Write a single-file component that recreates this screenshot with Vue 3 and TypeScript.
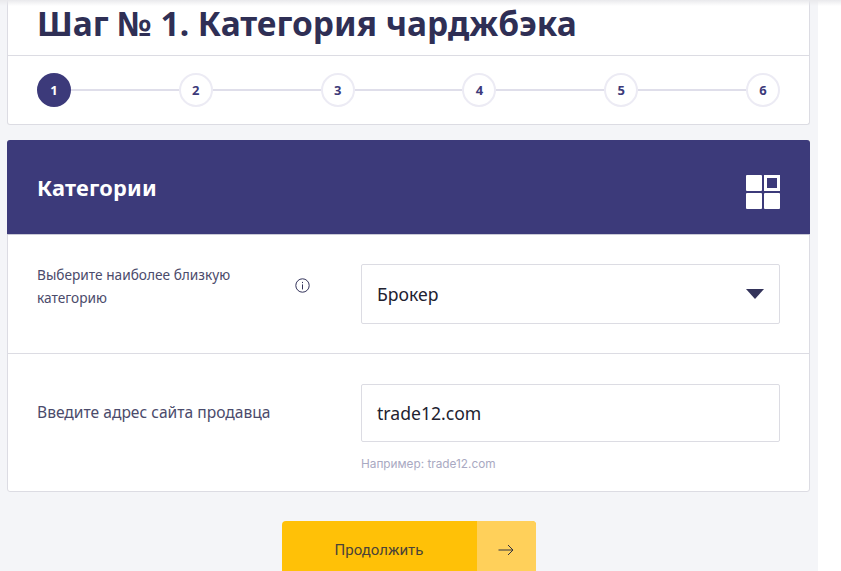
<script setup lang="ts">
const steps: number[] = [1, 2, 3, 4, 5, 6]
</script>

<template>
  <div class="page">
    <main class="column">
      <section class="card top">
        <h1 class="title">Шаг № 1. Категория чарджбэка</h1>
        <div class="steps">
          <template v-for="(s, i) in steps" :key="s">
            <span v-if="i > 0" class="line"></span>
            <span class="step" :class="{ active: i === 0 }">{{ s }}</span>
          </template>
        </div>
      </section>

      <section class="card form">
        <header class="head">
          <h2>Категории</h2>
          <svg width="34" height="34" viewBox="0 0 34 34">
            <rect x="0" y="0" width="16" height="16" rx="1" fill="#fff" />
            <rect x="19.5" y="1.5" width="13" height="13" fill="none" stroke="#fff" stroke-width="3" />
            <rect x="0" y="18" width="16" height="16" rx="1" fill="#fff" />
            <rect x="18" y="18" width="16" height="16" rx="1" fill="#fff" />
          </svg>
        </header>

        <div class="row first">
          <div class="label-wrap">
            <p class="label">Выберите наиболее близкую категорию</p>
            <svg class="info" width="15" height="15" viewBox="0 0 15 15">
              <circle cx="7.5" cy="7.5" r="6.7" fill="none" stroke="#33335a" stroke-width="1" />
              <rect x="7" y="6.4" width="1" height="5" fill="#33335a" />
              <rect x="7" y="3.9" width="1" height="1.2" fill="#33335a" />
            </svg>
          </div>
          <div class="control select">
            <span>Брокер</span>
            <svg width="18" height="10" viewBox="0 0 18 10">
              <path d="M0 0H18L9 10Z" fill="#33335a" />
            </svg>
          </div>
        </div>

        <div class="row second">
          <p class="label single">Введите адрес сайта продавца</p>
          <div class="field">
            <div class="control text">trade12.com</div>
            <p class="hint">Например: trade12.com</p>
          </div>
        </div>
      </section>

      <div class="actions">
        <button class="btn" type="button">
          <span class="btn-text">Продолжить</span>
          <span class="btn-icon">
            <svg width="16" height="12" viewBox="0 0 16 12">
              <path d="M0.5 6H15M10 1l5 5-5 5" fill="none" stroke="#33333f" stroke-width="1" />
            </svg>
          </span>
        </button>
      </div>
    </main>
  </div>
</template>

<style>
html, body { margin: 0; padding: 0; background: #fff; overflow: hidden; }
</style>

<style scoped>
.page {
  width: 841px;
  height: 571px;
  overflow: hidden;
  position: relative;
  background: #fff;
  font-family: "Noto Sans", "Open Sans", sans-serif;
}
.page::before {
  content: "";
  position: absolute;
  left: 0;
  right: 0;
  top: 0;
  height: 6px;
  background: linear-gradient(#e9e9ec, rgba(240, 240, 243, 0));
}
.column {
  width: 818px;
  height: 571px;
  box-sizing: border-box;
  padding: 0 8px 0 7px;
  background: #f4f5f8;
}
.card {
  background: #fff;
  border: 1px solid #dcdce3;
  border-radius: 3px;
}
.top {
  height: 125px;
  box-sizing: border-box;
  border-top: 0;
  border-radius: 0 0 3px 3px;
}
.title {
  margin: 0;
  height: 56px;
  box-sizing: border-box;
  padding-left: 29px;
  border-bottom: 1px solid #dcdce3;
  font-size: 33.5px;
  line-height: 47px;
  font-weight: 700;
  color: #2f2f55;
}
.steps {
  display: flex;
  align-items: center;
  padding: 17px 29px 0;
}
.step {
  width: 34px;
  height: 34px;
  box-sizing: border-box;
  flex: none;
  border-radius: 50%;
  border: 2px solid #ecebf4;
  display: flex;
  align-items: center;
  justify-content: center;
  font-size: 13px;
  font-weight: 700;
  color: #3c3a7a;
}
.step.active {
  background: #3c3a7a;
  border-color: #3c3a7a;
  color: #fff;
}
.line {
  flex: 1;
  height: 2px;
  background: #dfdeea;
}
.form {
  margin-top: 15px;
  height: 352px;
  box-sizing: border-box;
}
.head {
  height: 95px;
  margin: -1px -1px 0;
  background: #3c3a7a;
  border-radius: 3px 3px 0 0;
  display: flex;
  align-items: center;
  justify-content: space-between;
  padding: 0 30px;
  box-sizing: border-box;
  border-bottom: 1px solid #c9c9d6;
}
.head h2 {
  margin: 0;
  font-size: 21.8px;
  font-weight: 700;
  color: #fff;
  letter-spacing: 0.2px;
}
.head svg { margin-top: 10px; }
.row {
  display: flex;
  padding: 0 29px;
  box-sizing: border-box;
}
.first {
  height: 119px;
  padding-top: 29px;
  border-bottom: 1px solid #dcdce3;
}
.second {
  padding-top: 30px;
}
.label-wrap {
  width: 324px;
  flex: none;
  display: flex;
  justify-content: space-between;
  padding-right: 51px;
  box-sizing: border-box;
}
.label {
  margin: -1px 0 0;
  width: 224px;
  font-size: 13.7px;
  line-height: 23px;
  color: #4b4b6b;
}
.info { margin-top: 14px; }
.single {
  width: 324px;
  flex: none;
  font-size: 15.6px;
  line-height: 58px;
}
.control {
  box-sizing: border-box;
  border: 1px solid #dcdce3;
  border-radius: 2px;
  background: #fff;
  color: #222230;
  font-size: 17.6px;
  padding: 0 15px;
  display: flex;
  align-items: center;
}
.select {
  flex: 1;
  height: 60px;
  justify-content: space-between;
  padding-right: 15px;
}
.field { flex: 1; }
.text { height: 58px; }
.hint {
  margin: 14px 0 0;
  font-family: "Inter", "Noto Sans", sans-serif;
  font-size: 11.8px;
  line-height: 16px;
  color: #a9a9c2;
}
.actions {
  display: flex;
  justify-content: center;
  margin-top: 29px;
}
.btn {
  width: 254px;
  height: 60px;
  flex: none;
  padding: 0;
  border: 0;
  border-radius: 4px;
  overflow: hidden;
  display: flex;
  background: #ffc107;
  cursor: pointer;
}
.btn-text {
  flex: 1;
  display: flex;
  align-items: center;
  justify-content: center;
  padding-bottom: 2px;
  font-family: "Roboto", sans-serif;
  font-size: 15px;
  color: #4a4338;
}
.btn-icon {
  width: 59px;
  flex: none;
  display: flex;
  align-items: center;
  justify-content: center;
  padding-bottom: 2px;
  box-sizing: border-box;
  background: #ffd05a;
}
</style>
